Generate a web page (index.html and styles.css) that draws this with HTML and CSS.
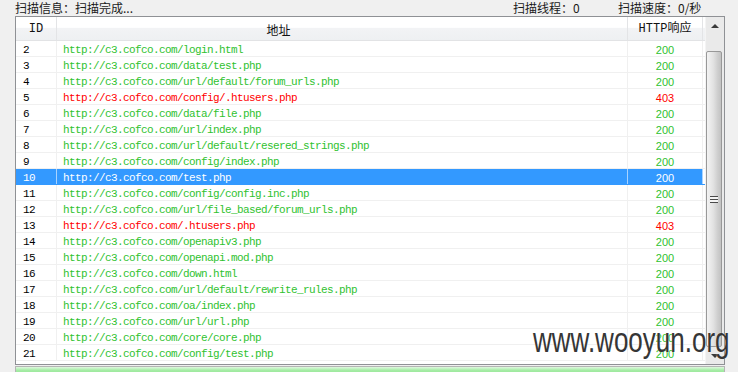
FILE: index.html
```html
<!DOCTYPE html>
<html lang="zh-CN">
<head>
    <meta charset="UTF-8">
    <title>扫描结果</title>
    <link rel="stylesheet" href="styles.css">
</head>
<body>
    <!-- Status line -->
    <div class="status">
        <span class="status-info">扫描信息：扫描完成...</span>
        <span class="status-threads">扫描线程：0</span>
        <span class="status-speed">扫描速度：0/秒</span>
    </div>

    <!-- Result list -->
    <div class="list">
        <div class="grid">
            <div class="head">
                <div class="th col-id">ID</div>
                <div class="th col-url"><span class="th-url-text">地址</span></div>
                <div class="th col-code">HTTP响应</div>
                <div class="th col-fill"></div>
            </div>
            <div id="rows"></div>
        </div>
        <div class="scrollbar">
            <div class="sb-btn"><span class="arrow-up"></span></div>
            <div class="sb-track">
                <div class="sb-thumb"><span class="grip"></span></div>
            </div>
            <div class="sb-btn"><span class="arrow-down"></span></div>
        </div>
    </div>

    <div class="progress"></div>

    <div class="watermark">www.wooyun.org</div>

    <script>
        const host = 'http://c3.cofco.com';
        const results = [
            [2, '/login.html', 200],
            [3, '/data/test.php', 200],
            [4, '/url/default/forum_urls.php', 200],
            [5, '/config/.htusers.php', 403],
            [6, '/data/file.php', 200],
            [7, '/url/index.php', 200],
            [8, '/url/default/resered_strings.php', 200],
            [9, '/config/index.php', 200],
            [10, '/test.php', 200],
            [11, '/config/config.inc.php', 200],
            [12, '/url/file_based/forum_urls.php', 200],
            [13, '/.htusers.php', 403],
            [14, '/openapiv3.php', 200],
            [15, '/openapi.mod.php', 200],
            [16, '/down.html', 200],
            [17, '/url/default/rewrite_rules.php', 200],
            [18, '/oa/index.php', 200],
            [19, '/url/url.php', 200],
            [20, '/core/core.php', 200],
            [21, '/config/test.php', 200]
        ];
        const selectedId = 10;

        function renderRows() {
            const container = document.getElementById('rows');
            container.innerHTML = '';
            results.forEach(([id, path, code]) => {
                const cls = ['row'];
                if (code !== 200) cls.push('row-bad');
                if (id === selectedId) cls.push('row-selected');
                container.innerHTML += `
                    <div class="${cls.join(' ')}">
                        <div class="td col-id">${id}</div>
                        <div class="td col-url">${host}${path}</div>
                        <div class="td col-code">${code}</div>
                        <div class="td col-fill"></div>
                    </div>
                `;
            });
        }

        renderRows();
    </script>
</body>
</html>
```

FILE: styles.css
```css
body {
    margin: 0;
    background: #f0f0f0;
    color: #000;
    font-family: 'Noto Sans CJK SC', sans-serif;
    font-size: 12px;
    overflow: hidden;
    position: relative;
    height: 372px;
}

/* status line */
.status {
    display: flex;
    height: 16px;
    line-height: 15px;
    padding-left: 15px;
    color: #1a1a1a;
}

.status-info {
    flex: 1;
}

.status-threads {
    width: 105px;
}

.status-speed {
    width: 120px;
}

/* list */
.list {
    display: flex;
    margin-left: 15px;
    width: 708px;
    height: 347px;
    border: 1px solid #8f9195;
    background: #fff;
}

.grid {
    flex: 1;
    overflow: hidden;
}

.head {
    display: flex;
    height: 23px;
    border-bottom: 1px solid #e2e3e5;
    background: linear-gradient(#ffffff, #ffffff 45%, #f2f3f5 50%, #eef0f2);
}

.th {
    box-sizing: border-box;
    height: 23px;
    padding-top: 2px;
    line-height: 21px;
    border-right: 1px solid #e3e4e6;
    text-align: center;
    font-family: 'Liberation Mono', 'Noto Sans CJK SC', monospace;
    font-size: 12px;
    color: #111;
}

.col-id {
    width: 41px;
    flex: none;
}

.col-url {
    width: 571px;
    flex: none;
}

.col-code {
    width: 75px;
    flex: none;
}

.col-fill {
    flex: 1;
    border-right: none;
}

.th.col-url {
    padding-right: 127px;
}

.th-url-text {
    font-family: 'Noto Sans CJK SC', sans-serif;
}

/* rows */
.row {
    display: flex;
    height: 15px;
    border-bottom: 1px solid #f0f0f0;
}

.td {
    box-sizing: border-box;
    height: 15px;
    padding-top: 4px;
    line-height: 11px;
    border-right: 1px solid #f0f0f0;
    white-space: nowrap;
}

.td.col-id {
    padding-left: 7px;
    font-family: 'Liberation Mono', monospace;
    font-size: 11px;
    letter-spacing: -0.6px;
    color: #000;
}

.td.col-url {
    padding-left: 6px;
    font-family: 'Liberation Mono', monospace;
    font-size: 11px;
    letter-spacing: -0.6px;
    color: #2fc22f;
    overflow-x: hidden;
}

.td.col-code {
    text-align: center;
    font-family: 'Liberation Sans', sans-serif;
    font-size: 11px;
    color: #2fc22f;
}

.td.col-fill {
    border-right: none;
}

.row-bad .td.col-url,
.row-bad .td.col-code {
    color: #ff0000;
}

.row-selected .td.col-id,
.row-selected .td.col-url,
.row-selected .td.col-code {
    background: #3399ff;
    color: #fff;
    border-right-color: #a9d3ff;
}

.row-selected {
    border-bottom-color: #3399ff;
}

/* scrollbar */
.scrollbar {
    width: 18px;
    display: flex;
    flex-direction: column;
    background: #eaeaea;
    border-left: 1px solid #f4f4f4;
}

.sb-btn {
    height: 17px;
    display: flex;
    align-items: center;
    justify-content: center;
}

.arrow-up {
    width: 0;
    height: 0;
    border-left: 4px solid transparent;
    border-right: 4px solid transparent;
    border-bottom: 4px solid #3a3a3a;
}

.arrow-down {
    width: 0;
    height: 0;
    border-left: 4px solid transparent;
    border-right: 4px solid transparent;
    border-top: 4px solid #3a3a3a;
}

.sb-track {
    flex: 1;
    padding-top: 17px;
    display: flex;
}

.sb-thumb {
    flex: 1;
    margin: 0 2px 0 0;
    border: 1px solid #989898;
    border-radius: 2px;
    background: linear-gradient(to right, #f3f3f3, #e2e2e2 45%, #cfcfcf 75%, #c2c2c2);
    display: flex;
    align-items: center;
    justify-content: center;
}

.grip {
    width: 8px;
    height: 7px;
    background: repeating-linear-gradient(#4a4a4a 0, #4a4a4a 1px, #f4f4f4 1px, #f4f4f4 3px);
}

/* progress */
.progress {
    margin-left: 15px;
    margin-top: 1px;
    width: 708px;
    height: 8px;
    border: 1px solid #b4b4b4;
    background: linear-gradient(#dff8df, #a6eca6 40%, #8fe38f);
}

/* watermark */
.watermark {
    position: absolute;
    left: 533px;
    top: 323px;
    font-family: 'Liberation Sans', Arial, sans-serif;
    font-size: 26px;
    line-height: 26px;
    color: #363636;
    transform: scaleY(1.33);
    transform-origin: top left;
    text-shadow: 0 0 1px rgba(255, 255, 255, 0.8);
    white-space: nowrap;
}
```
